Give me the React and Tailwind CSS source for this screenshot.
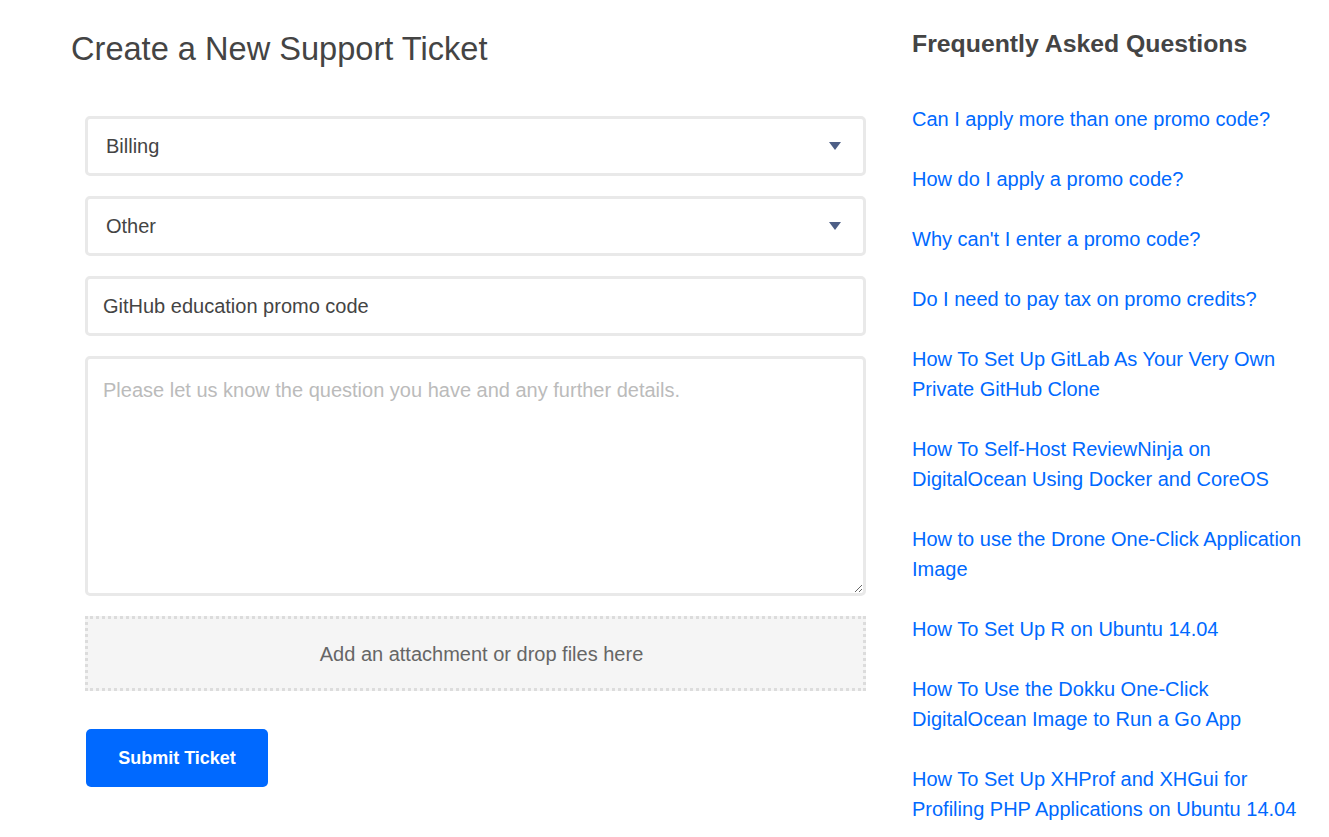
import { useState } from 'react';

const faqs = [
  'Can I apply more than one promo code?',
  'How do I apply a promo code?',
  "Why can't I enter a promo code?",
  'Do I need to pay tax on promo credits?',
  'How To Set Up GitLab As Your Very Own Private GitHub Clone',
  'How To Self-Host ReviewNinja on DigitalOcean Using Docker and CoreOS',
  'How to use the Drone One-Click Application Image',
  'How To Set Up R on Ubuntu 14.04',
  'How To Use the Dokku One-Click DigitalOcean Image to Run a Go App',
  'How To Set Up XHProf and XHGui for Profiling PHP Applications on Ubuntu 14.04',
];

const Caret = () => (
  <svg
    className="pointer-events-none absolute right-[25px] top-1/2 -translate-y-1/2"
    width="12"
    height="8"
    viewBox="0 0 12 8"
  >
    <path d="M0 0h12L6 8z" fill="#4d5f86" />
  </svg>
);

const SelectField = ({ value, options, onChange }) => (
  <div className="relative">
    <select
      value={value}
      onChange={(e) => onChange(e.target.value)}
      className="w-full h-[60px] appearance-none bg-white border-[3px] border-[#e9e9e9] rounded-[5px] pl-[18px] pr-12 text-[20px] text-[#444] outline-none"
    >
      {options.map((o) => (
        <option key={o} value={o}>{o}</option>
      ))}
    </select>
    <Caret />
  </div>
);

const App = () => {
  const [category, setCategory] = useState('Billing');
  const [topic, setTopic] = useState('Other');
  const [subject, setSubject] = useState('GitHub education promo code');
  const [details, setDetails] = useState('');

  return (
    <div className="min-h-screen bg-white font-['Liberation_Sans',Arial,sans-serif] flex pl-[71px]">
      {/* Form */}
      <div className="w-[795px]">
        <h1 className="mt-[29px] text-[32.6px] leading-[40px] text-[#444]">
          Create a New Support Ticket
        </h1>

        <div className="mt-[47px] pl-[14px] flex flex-col gap-[20px]">
          <SelectField
            value={category}
            options={['Billing', 'Account', 'Technical']}
            onChange={setCategory}
          />
          <SelectField
            value={topic}
            options={['Other', 'Promo Codes', 'Payments']}
            onChange={setTopic}
          />
          <input
            value={subject}
            onChange={(e) => setSubject(e.target.value)}
            className="h-[60px] bg-white border-[3px] border-[#e9e9e9] rounded-[5px] px-[15px] text-[20px] text-[#444] outline-none"
          />
          <textarea
            value={details}
            onChange={(e) => setDetails(e.target.value)}
            placeholder="Please let us know the question you have and any further details."
            className="h-[240px] resize-y bg-white border-[3px] border-[#e9e9e9] rounded-[5px] px-[15px] pt-[17px] text-[20px] leading-[28px] text-[#444] placeholder:text-[#bbb] outline-none"
          />
          <div className="h-[75px] flex items-center justify-center pl-[12px] bg-[#f5f5f5] border-[3px] border-dotted border-[#dcdcdc] text-[20px] text-[#666]">
            Add an attachment or drop files here
          </div>
        </div>

        <div className="pl-[15px] mt-[38px]">
          <button className="w-[182px] h-[58px] bg-[#0069ff] rounded-[5px] text-white text-[18px] font-bold">
            Submit Ticket
          </button>
        </div>
      </div>

      {/* FAQ */}
      <div className="ml-[46px] w-[400px]">
        <h2 className="mt-[29px] text-[24.8px] leading-[30px] font-bold text-[#444]">
          Frequently Asked Questions
        </h2>
        <ul className="mt-[45px] flex flex-col gap-[30px]">
          {faqs.map((q) => (
            <li key={q}>
              <a href="#" className="text-[20px] leading-[30px] text-[#0069ff]">
                {q}
              </a>
            </li>
          ))}
        </ul>
      </div>
    </div>
  );
};

export default App;
